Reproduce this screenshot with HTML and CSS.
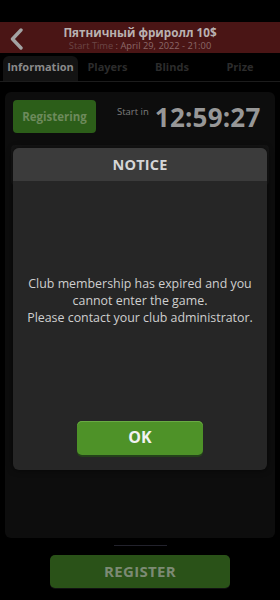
FILE: index.html
```html
<!DOCTYPE html>
<html>
<head>
<meta charset="utf-8">
<link rel="stylesheet" href="styles.css">
</head>
<body>
<div class="screen">
  <div class="status"></div>
  <header class="header">
    <svg class="back" width="16" height="22" viewBox="0 0 16 22"><path d="M13 2 L4.5 11 L13 20" fill="none" stroke="#a3a3a3" stroke-width="3.4" stroke-linecap="round" stroke-linejoin="round"/></svg>
    <div class="title">Пятничный фриролл 10$</div>
    <div class="subtitle"><span class="st-label">Start Time</span> : April 29, 2022 - 21:00</div>
  </header>
  <nav class="tabs">
    <div class="tab active">Information</div>
    <div class="tab">Players</div>
    <div class="tab">Blinds</div>
    <div class="tab">Prize</div>
  </nav>
  <main class="panel">
    <div class="top-row">
      <div class="reg-btn">Registering</div>
      <div class="start-in">Start in</div>
      <div class="timer">12:59:27</div>
    </div>
    <div class="card">
      <span class="card-l">Total Prize</span>
      <span class="card-r">10$</span>
    </div>
  </main>
  <div class="home-line"></div>
  <div class="footer">
    <div class="register">REGISTER</div>
  </div>

  <div class="modal">
    <div class="modal-head">NOTICE</div>
    <div class="modal-body">
      <p class="msg">Club membership has expired and you<br>cannot enter the game.<br>Please contact your club administrator.</p>
      <div class="ok">OK</div>
    </div>
  </div>
</div>
</body>
</html>
```
FILE: styles.css
```css
* { box-sizing: border-box; }
html, body { margin: 0; padding: 0; background: #000; }
body { font-family: "Open Sans", "Noto Sans", sans-serif; }
.screen { position: relative; width: 280px; height: 600px; overflow: hidden; background: #000; }
.status { height: 22px; }
.header {
  position: relative; height: 31px; background: #4a1515;
  display: flex; flex-direction: column; align-items: center;
  padding-top: 3px;
}
.back { position: absolute; left: 8px; top: 6px; }
.title { color: #b9b1b1; font-weight: 700; font-size: 11.7px; line-height: 14px; }
.subtitle { margin-top: 1px; color: #8a6868; font-size: 9.3px; line-height: 11px; }
.st-label { color: #6a4646; }
.tabs { display: flex; height: 29px; padding: 3px 3px 0; border-bottom: 1px solid #1c1c1c; }
.tab { text-align: center; color: #2c2c2c; font-weight: 700; font-size: 11px; line-height: 22px; }
.tab.active { flex: 0 0 75px; background: #131313; color: #8a8a8a; border-radius: 6px 6px 0 0; }
.tab:nth-child(2) { flex: 0 0 59px; }
.tab:nth-child(3) { flex: 0 0 70px; }
.tab:nth-child(4) { flex: 0 0 66px; }
.panel {
  margin: 10px 5px 0; height: 446px; background: #0d0d0d; border-radius: 6px;
  padding: 8px 8px 0;
}
.top-row { display: flex; align-items: flex-start; height: 37px; }
.reg-btn {
  width: 83px; height: 33px; background: #2c5e19; border-radius: 4px;
  color: #6d8a5c; font-weight: 700; font-size: 11.5px; line-height: 33px; text-align: center;
}
.start-in { margin-left: 21px; margin-top: 5px; color: #7e7e7e; font-size: 9.5px; }
.timer { margin-left: 6px; margin-top: 0; color: #979797; font-weight: 700; font-size: 26px; line-height: 34px; letter-spacing: 0.2px; }
.card { margin: 8px -2px 0; height: 40px; background: #151515; border-radius: 4px; display: flex; justify-content: space-between; padding: 4px 8px; color: #3a3a3a; font-size: 10px; }
.home-line { width: 53px; height: 1px; background: #22222c; margin: 7px auto 0; }
.footer { display: flex; justify-content: center; padding-top: 9px; }
.register {
  width: 180px; height: 33px; background: #2a5218; border-radius: 5px;
  color: #7c8a74; font-weight: 700; font-size: 15px; line-height: 33px; text-align: center; letter-spacing: 0.3px;
  box-shadow: 0 1px 0 #111;
}
.modal {
  position: absolute; left: 13px; top: 148px; width: 254px; height: 322px;
  border-radius: 6px; overflow: hidden; background: #262626;
  box-shadow: 0 0 6px rgba(0,0,0,0.6);
  display: flex; flex-direction: column;
}
.modal-head { height: 33px; background: #3b3b3b; color: #d6d6d6; font-weight: 700; font-size: 14.5px; line-height: 34px; text-align: center; letter-spacing: 0.2px; }
.modal-body { flex: 1; display: flex; flex-direction: column; align-items: center; }
.msg { margin: 94px 0 0; color: #cfcfcf; font-size: 12.4px; line-height: 17px; text-align: center; }
.ok {
  margin-top: 95px; width: 126px; height: 34px; background: #4e9228; border-radius: 5px;
  color: #f2f2f2; font-weight: 700; font-size: 16px; line-height: 33px; text-align: center;
  box-shadow: 0 2px 0 #24421a, inset 0 1px 0 #6aab44;
}
```
